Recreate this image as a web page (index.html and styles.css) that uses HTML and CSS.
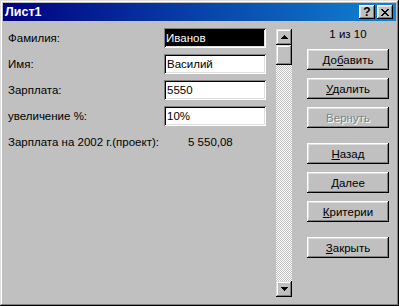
FILE: index.html
```html
<!DOCTYPE html>
<html lang="ru">
<head>
  <meta charset="UTF-8" />
  <title>Лист1</title>
  <link rel="stylesheet" href="styles.css">
</head>
<body>

  <div class="window">
    <div class="titlebar">
      <span class="title">Лист1</span>
      <div class="title-buttons">
        <button class="tb-btn help">?</button>
        <button class="tb-btn close">
          <svg width="8" height="7" viewBox="0 0 8 7"><path d="M0 0h2v1h1v1h2V1h1V0h2v1H7v1H6v1H5v1h1v1h1v1h1v1H6V6H5V5H3v1H2v1H0V6h1V5h1V4h1V3H2V2H1V1H0z"/></svg>
        </button>
      </div>
    </div>

    <div class="content">
      <div class="form">
        <span class="label">Фамилия:</span>
        <input class="field sel" type="text" value="Иванов">
        <span class="label">Имя:</span>
        <input class="field" type="text" value="Василий">
        <span class="label">Зарплата:</span>
        <input class="field" type="text" value="5550">
        <span class="label">увеличение %:</span>
        <input class="field" type="text" value="10%">
        <span class="label">Зарплата на 2002 г.(проект):</span>
        <span class="calc">5 550,08</span>
      </div>

      <div class="scrollbar">
        <div class="sb-btn">
          <svg width="7" height="4" viewBox="0 0 7 4"><path d="M3 0h1v1h1v1h1v1h1v1H0V3h1V2h1V1h1z"/></svg>
        </div>
        <div class="sb-thumb"></div>
        <div class="sb-track"></div>
        <div class="sb-btn">
          <svg width="7" height="4" viewBox="0 0 7 4"><path d="M0 0h7v1H6v1H5v1H4v1H3V3H2V2H1V1H0z"/></svg>
        </div>
      </div>

      <div class="side">
        <div class="counter">1 из 10</div>
        <button class="btn">До<u>б</u>авить</button>
        <button class="btn"><u>У</u>далить</button>
        <button class="btn" disabled>Вернуть</button>
        <button class="btn group"><u>Н</u>азад</button>
        <button class="btn"><u>Д</u>алее</button>
        <button class="btn"><u>К</u>ритерии</button>
        <button class="btn group"><u>З</u>акрыть</button>
      </div>
    </div>
  </div>

</body>
</html>
```

FILE: styles.css
```css
body {
  margin: 0;
  background: #c0c0c0;
}

.window {
  width: 399px;
  height: 306px;
  box-sizing: border-box;
  padding: 3px;
  display: flex;
  flex-direction: column;
  background: #c0c0c0;
  box-shadow: inset -1px -1px #000, inset 1px 1px #dfdfdf,
              inset -2px -2px #808080, inset 2px 2px #fff;
  font: 11.5px "Liberation Sans", Arial, sans-serif;
  color: #000;
}

.titlebar {
  height: 18px;
  display: flex;
  align-items: center;
  padding: 0 3px 0 2px;
  background: linear-gradient(to right, #000080, #1084d0);
}

.title {
  flex: 1;
  color: #fff;
  font-weight: bold;
  font-size: 12.5px;
}

.title-buttons {
  display: flex;
  gap: 2px;
}

.tb-btn {
  width: 16px;
  height: 14px;
  padding: 0;
  border: 0;
  display: flex;
  align-items: center;
  justify-content: center;
  background: #c0c0c0;
  box-shadow: inset -1px -1px #000, inset 1px 1px #fff,
              inset -2px -2px #808080, inset 2px 2px #dfdfdf;
  font: bold 12px "Liberation Sans", Arial, sans-serif;
  color: #000;
}

.content {
  flex: 1;
  display: flex;
  padding: 7px 7px 6px 5px;
}

.form {
  width: 258px;
  display: grid;
  grid-template-columns: 156px 102px;
  grid-auto-rows: 20px;
  row-gap: 6px;
  align-content: start;
  align-items: center;
}

.field {
  height: 20px;
  width: 102px;
  box-sizing: border-box;
  border: 0;
  padding: 0 0 0 3px;
  outline: none;
  font: inherit;
  color: #000;
  background: #fff;
  box-shadow: inset 1px 1px #808080, inset -1px -1px #fff,
              inset 2px 2px #000, inset -2px -2px #dfdfdf;
}

.field.sel {
  background: #000;
  color: #fff;
  padding-left: 2px;
}

.calc {
  padding-left: 24px;
}

.scrollbar {
  width: 16px;
  margin: 1px 0 0 10px;
  display: flex;
  flex-direction: column;
}

.sb-btn,
.sb-thumb {
  background: #c0c0c0;
  box-shadow: inset -1px -1px #000, inset 1px 1px #dfdfdf,
              inset -2px -2px #808080, inset 2px 2px #fff;
}

.sb-btn {
  height: 16px;
  display: flex;
  align-items: center;
  justify-content: center;
}

.sb-thumb {
  height: 20px;
}

.sb-track {
  flex: 1;
  background: repeating-conic-gradient(#c0c0c0 0% 25%, #fff 0% 50%) 0 0 / 2px 2px;
}

.side {
  width: 82px;
  margin-left: 15px;
}

.counter {
  height: 13px;
  line-height: 13px;
  text-align: center;
}

.btn {
  display: block;
  width: 82px;
  height: 21px;
  margin-top: 8px;
  padding: 0;
  border: 0;
  background: #c0c0c0;
  box-shadow: inset -1px -1px #000, inset 1px 1px #fff,
              inset -2px -2px #808080, inset 2px 2px #dfdfdf;
  font: inherit;
  color: #000;
}

.btn:disabled {
  color: #808080;
  text-shadow: 1px 1px #fff;
}

.btn.group {
  margin-top: 15px;
}
```
